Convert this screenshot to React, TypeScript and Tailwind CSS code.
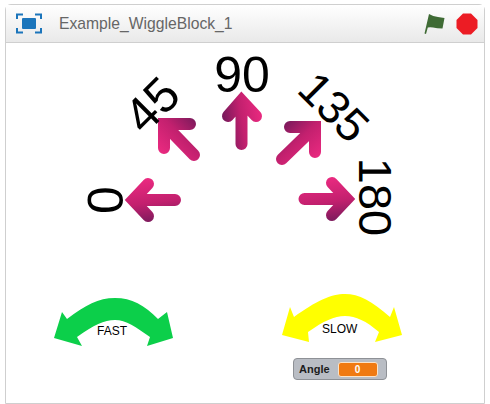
/**
 * Scratch player window, Example_WiggleBlock_1
 * The stage is a free canvas, so sprites sit at their own coordinates
 */

const numbers = [
  { text: '0', className: 'left-[100px] top-[157px] -rotate-90 text-[50px]' },
  { text: '45', className: 'left-[146px] top-[62px] -rotate-45 text-[49px]' },
  { text: '90', className: 'left-[236px] top-[32px] text-[50px]' },
  { text: '135', className: 'left-[328px] top-[64px] rotate-45 text-[46px]' },
  { text: '180', className: 'left-[369px] top-[154px] rotate-90 text-[47px]' },
]

// all coordinates are in stage space, x1..y2 run the gradient from light to dark
const arrows = [
  { id: 'a0', d: 'M169 157 L127 157 M142 141 L127 157 L142 173', x1: 140, y1: 136, x2: 146, y2: 180 },
  { id: 'a45', d: 'M188 112 L158 81 M184 81 L158 81 L158 105', x1: 154, y1: 110, x2: 190, y2: 76 },
  { id: 'a90', d: 'M235.5 101 L235.5 57.5 M222 73 L235.5 57.5 L250 73', x1: 256, y1: 70, x2: 218, y2: 76 },
  { id: 'a135', d: 'M276 116 L309 84 M284 84 L309 84 L309 109', x1: 314, y1: 114, x2: 280, y2: 78 },
  { id: 'a180', d: 'M298.5 156 L341 156 M326 140 L341 156 L326 172', x1: 326, y1: 134, x2: 332, y2: 178 },
]

function FullscreenIcon() {
  return (
    <svg width="26" height="21" viewBox="0 0 26 21" className="shrink-0">
      <path d="M1 6V1.5H7M19 1.5H25V6M25 15V19.5H19M7 19.5H1V15" fill="none" stroke="#1b75bb" strokeWidth="2" />
      <rect x="6" y="5" width="14" height="11" rx="1" fill="#1b75bb" />
    </svg>
  )
}

function FlagIcon() {
  return (
    <svg width="22" height="22" viewBox="0 0 22 22" className="shrink-0">
      <path d="M0.5 20.5 L5 1 Q9 3.5 14 4 Q17 4.5 20.5 5 L18.5 15.5 Q13 15.5 9 14.5 Q6 14 3.8 14.5 L2 21 Z" fill="#3f6b35" />
    </svg>
  )
}

function StopIcon() {
  return (
    <svg width="22" height="22" viewBox="0 0 22 22" className="shrink-0">
      <polygon points="7,0.5 15,0.5 21.5,7 21.5,15 15,21.5 7,21.5 0.5,15 0.5,7" fill="#ec1c24" />
    </svg>
  )
}

function StageDrawing() {
  return (
    <svg width="478" height="360" viewBox="0 0 478 360" className="absolute inset-0">
      <defs>
        {arrows.map(a => (
          <linearGradient key={a.id} id={a.id} gradientUnits="userSpaceOnUse" x1={a.x1} y1={a.y1} x2={a.x2} y2={a.y2}>
            <stop offset="0" stopColor="#ea2a80" />
            <stop offset="0.55" stopColor="#c2206e" />
            <stop offset="1" stopColor="#7a1a5c" />
          </linearGradient>
        ))}
      </defs>
      {arrows.map(a => (
        <path
          key={a.id}
          d={a.d}
          fill="none"
          stroke={`url(#${a.id})`}
          strokeWidth="12"
          strokeLinecap="round"
          strokeLinejoin="miter"
        />
      ))}
      {/* FAST */}
      <path
        d="M48 295 L56 269 L61 276 C80 262 92 255 109 255 C126 255 138 262 152 276 L161 269 L167 295 L141 303 L144 294 C130 284 120 277 109 277 C98 277 88 282 71 294 L76 303 Z"
        fill="#0ccf4a"
      />
      {/* SLOW */}
      <path
        d="M276 292 L284 264 L288 274 C310 258 325 251 339 251 C353 251 366 258 384 274 L388 264 L396 292 L369 299 L373 289 C360 278 350 273 339 273 C328 273 318 278 302 289 L303 299 Z"
        fill="#ffff00"
      />
    </svg>
  )
}

export default function App() {
  return (
    <div className="h-[404px] w-[490px] bg-white pl-[5px] pt-[4px] font-['Liberation_Sans',Arial,sans-serif]">
      <div className="flex h-[400px] w-[480px] flex-col rounded-t-[6px] border border-[#cfcfcf]">
        <div className="flex h-[38px] items-center border-b border-[#cfcfcf] bg-gradient-to-b from-white to-[#e9e9e9] pl-[10px] pr-[6px]">
          <FullscreenIcon />
          <span className="ml-[17px] text-[15.7px] text-[#666666]">Example_WiggleBlock_1</span>
          <div className="ml-auto flex items-center gap-[10px]">
            <FlagIcon />
            <StopIcon />
          </div>
        </div>
        <div className="relative flex-1 bg-white">
          <StageDrawing />
          {numbers.map(n => (
            <span
              key={n.text}
              className={`absolute -translate-x-1/2 -translate-y-1/2 leading-none text-black ${n.className}`}
            >
              {n.text}
            </span>
          ))}
          <span className="absolute left-[91px] top-[282px] text-[12px] leading-none text-black">FAST</span>
          <span className="absolute left-[316px] top-[280px] text-[12px] leading-none text-black">SLOW</span>
          <div className="absolute left-[287px] top-[315px] flex h-[22px] w-[94px] items-center rounded-[4px] border border-[#8e9196] bg-[#b9bdc4] pl-[5px]">
            <span className="text-[11px] font-bold text-[#1c1c1c]">Angle</span>
            <span className="ml-[8px] flex h-[15px] w-[40px] items-center justify-center rounded-[3px] border border-[#fbe3c8] bg-[#f07a12] text-[10px] font-bold text-white">
              0
            </span>
          </div>
        </div>
      </div>
    </div>
  )
}
